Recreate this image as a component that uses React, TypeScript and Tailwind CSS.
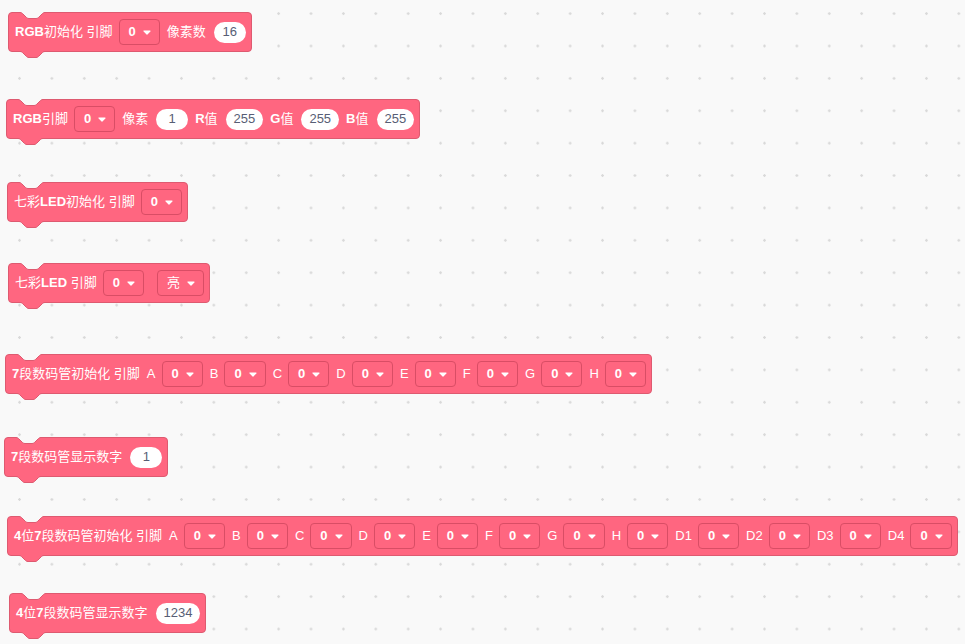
import React from 'react';

type Item =
  | { t: 'label'; s: string; cls?: string }
  | { t: 'dd'; v: string; cls?: string }
  | { t: 'num'; v: string; cls?: string };

type Block = { pos: string; items: Item[] };

const L = (s: string, cls?: string): Item => ({ t: 'label', s, cls });
const D = (v: string, cls?: string): Item => ({ t: 'dd', v, cls });
const N = (v: string, cls?: string): Item => ({ t: 'num', v, cls });

const pins = (names: string[]) => names.flatMap((n) => [L(n), D('0')]);

const blocks: Block[] = [
  { pos: 'left-[8px] top-[12px]', items: [L('RGB初始化 引脚'), D('0'), L('像素数'), N('16')] },
  {
    pos: 'left-[6px] top-[99px]',
    items: [L('RGB引脚'), D('0'), L('像素'), N('1'), L('R值'), N('255'), L('G值'), N('255'), L('B值'), N('255')],
  },
  { pos: 'left-[7px] top-[182px]', items: [L('七彩LED初始化 引脚'), D('0')] },
  { pos: 'left-[8px] top-[263px]', items: [L('七彩LED 引脚'), D('0'), D('亮', 'ml-[7px]')] },
  {
    pos: 'left-[5px] top-[354px]',
    items: [L('7段数码管初始化 引脚'), ...pins(['A', 'B', 'C', 'D', 'E', 'F', 'G', 'H'])],
  },
  { pos: 'left-[4px] top-[437px]', items: [L('7段数码管显示数字'), N('1')] },
  {
    pos: 'left-[7px] top-[516px]',
    items: [
      L('4位7段数码管初始化 引脚'),
      ...pins(['A', 'B', 'C', 'D', 'E', 'F', 'G', 'H', 'D1', 'D2', 'D3', 'D4']),
    ],
  },
  { pos: 'left-[9px] top-[593px]', items: [L('4位7段数码管显示数字'), N('1234')] },
];

const curve =
  'M0,0.5 c1.5,0 2.3,0.8 3,1.5 l3,3 c0.8,0.8 1.5,1.5 3,1.5 h7 c1.5,0 2.2,-0.7 3,-1.5 l3,-3 c0.7,-0.7 1.5,-1.5 3,-1.5';

// the notch cut into the top edge, and the tab under the block
const Notch = ({ fill, cls }: { fill: string; cls: string }) => (
  <svg className={`absolute left-[11px] ${cls}`} width="26" height="8" viewBox="0 0 26 8" overflow="visible">
    <path d={curve + ' L25,0 L0,0 Z'} fill={fill} />
    <path d={curve} fill="none" stroke="#DE5A70" strokeWidth="1" />
  </svg>
);

const Caret = () => (
  <svg width="8" height="5" viewBox="0 0 8 5">
    <path d="M1,1 L7,1 L4,4 Z" fill="#fff" stroke="#fff" strokeWidth="1.2" strokeLinejoin="round" />
  </svg>
);

const hasCjk = (s: string) => /[\u4e00-\u9fff]/.test(s);

// labels with Chinese text show their latin letters heavier
const Label = ({ s, cls }: { s: string; cls?: string }) => {
  const parts = hasCjk(s) ? s.split(/([A-Za-z0-9]+)/) : [s];
  return (
    <span className={`whitespace-pre text-white text-[13px] ${cls ?? ''}`}>
      {parts.map((p, i) =>
        /^[A-Za-z0-9]+$/.test(p) && hasCjk(s) ? (
          <span key={i} className="font-bold">
            {p}
          </span>
        ) : (
          <span key={i}>{p}</span>
        ),
      )}
    </span>
  );
};

const Dropdown = ({ v, cls }: { v: string; cls?: string }) => (
  <span
    className={`h-[26px] flex items-center gap-[7px] pl-[9px] pr-[8px] rounded-[4px] border border-[#D94D65] text-white text-[13px] ${
      v === '0' ? 'font-bold' : ''
    } ${cls ?? ''}`}
  >
    {v}
    <Caret />
  </span>
);

const NumField = ({ v, cls }: { v: string; cls?: string }) => (
  <span
    className={`h-[21px] min-w-[32px] px-[8px] ml-[2px] flex items-center justify-center rounded-full bg-white text-[13px] text-[#575E75] ${
      cls ?? ''
    }`}
  >
    {v}
  </span>
);

const ScratchBlock = ({ b }: { b: Block }) => (
  <div
    className={`absolute ${b.pos} h-[40px] flex items-center gap-[6px] pl-[6px] pr-[5px] bg-[#FF6680] border border-[#DE5A70] rounded-[4px]`}
  >
    <Notch fill="#F9F9F9" cls="top-[-1px]" />
    <Notch fill="#FF6680" cls="top-full" />
    {b.items.map((it, i) =>
      it.t === 'label' ? (
        <Label key={i} s={it.s} cls={i > 0 ? 'ml-[1px]' : ''} />
      ) : it.t === 'dd' ? (
        <Dropdown key={i} v={it.v} cls={it.cls} />
      ) : (
        <NumField key={i} v={it.v} cls={it.cls} />
      ),
    )}
  </div>
);

export default function App() {
  return (
    <div className="relative w-[965px] h-[644px] overflow-hidden bg-[#F9F9F9] bg-[radial-gradient(circle,#d9d9d9_1px,transparent_1.5px)] bg-[length:32.4px_32.4px] bg-[position:3.3px_-2.6px] font-['Liberation_Sans','Noto_Sans_CJK_SC',sans-serif]">
      {blocks.map((b, i) => (
        <ScratchBlock key={i} b={b} />
      ))}
    </div>
  );
}
